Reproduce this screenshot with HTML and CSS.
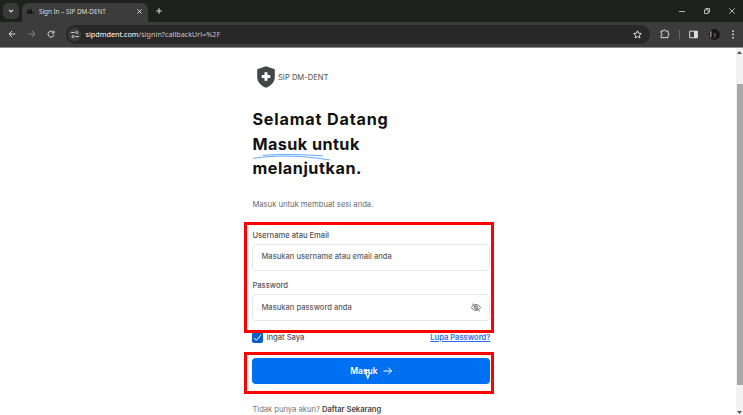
FILE: index.html
```html
<!DOCTYPE html>
<html lang="id">
<head>
<meta charset="utf-8">
<title>Sign In - SIP DM-DENT</title>
<link rel="stylesheet" href="styles.css">
</head>
<body>
<div class="browser">
  <header class="tabs">
    <span class="tab-search"><svg width="6" height="4" viewBox="0 0 6 4"><path d="M1 .8 3 2.8 5 .8"/></svg></span>
    <div class="tab">
      <svg class="favicon" width="9" height="7" viewBox="0 0 9 7"><path d="m1 5.5 2-4v4l2.5-4v4"/><circle cx="7.4" cy="5" r=".5"/></svg>
      <span class="tab-title">Sign In – SIP DM-DENT</span>
      <svg class="close" width="5" height="5" viewBox="0 0 5 5"><path d="m.5.5 4 4m0-4-4 4"/></svg>
    </div>
    <svg class="plus" width="6" height="6" viewBox="0 0 6 6"><path d="M3 .2v5.6M.2 3h5.6"/></svg>
    <div class="window-controls">
      <svg width="6" height="6" viewBox="0 0 6 6"><path d="M0 3.5h6"/></svg>
      <svg width="6" height="6" viewBox="0 0 6 6"><path d="M.5 1.8h3.7v3.7H.5zM1.8 1.5v-1h3.7v3.7h-1"/></svg>
      <svg width="6" height="6" viewBox="0 0 6 6"><path d="m.3.3 5.4 5.4m0-5.4L.3 5.7"/></svg>
    </div>
  </header>
  <nav class="toolbar">
    <svg class="back" width="8" height="8" viewBox="0 0 8 8"><path d="M7.3 4H1m3-3L1 4l3 3"/></svg>
    <svg class="forward" width="8" height="8" viewBox="0 0 8 8"><path d="M.7 4H7M4 1l3 3-3 3"/></svg>
    <svg class="reload" width="8" height="8" viewBox="0 0 8 8"><path d="M6.6 2.5A3 3 0 1 0 7 4.8M7 .6v2.5H4.5"/></svg>
    <div class="address">
      <span class="site-info"><svg width="8" height="7" viewBox="0 0 8 7"><path d="M0 1.5h3.5M4.5 5.5H8"/><circle cx="5.7" cy="1.5" r="1"/><circle cx="2.2" cy="5.5" r="1"/></svg></span>
      <span class="url"><b>sipdmdent.com</b>/signin?callbackUrl=%2F</span>
      <svg class="star" width="9" height="9" viewBox="0 0 9 9"><path d="m4.5.8 1.1 2.4 2.7.3-2 1.8.6 2.7-2.4-1.4L2.1 8l.6-2.7-2-1.8 2.7-.3z"/></svg>
    </div>
    <svg class="puzzle" width="10" height="10" viewBox="0 0 10 10"><path d="M1 2h2.3c.1-1.3 2.1-1.3 2.2 0H8v2.2c1.4.1 1.4 2.1 0 2.2v2.3H1V6.5c1.5-.1 1.5-2.2 0-2.3z"/></svg>
    <span class="divider"></span>
    <svg class="panel" width="9" height="9" viewBox="0 0 9 9"><path d="M.7 1.2h7.6v6.6H.7z"/><path class="solid" d="M5 1h3.5v7H5z"/></svg>
    <svg class="avatar" width="11" height="11" viewBox="0 0 11 11"><circle cx="5.5" cy="5.5" r="5.4" fill="#141619"/><path d="M1.8 2.3v6" stroke="#869196" stroke-width="1.4"/><path d="M5 4.2h1.7v3.4H5z" fill="#865333"/><path d="M3.7 8.3h3v1h-3z" fill="#583522"/></svg>
    <svg class="kebab" width="2" height="9" viewBox="0 0 2 9"><circle cx="1" cy="1.2" r=".9"/><circle cx="1" cy="4.5" r=".9"/><circle cx="1" cy="7.8" r=".9"/></svg>
  </nav>
  <div class="viewport">
    <main class="signin">
      <div class="brand">
        <svg width="18" height="22" viewBox="0 0 18 22"><path d="M9 .2 17.8 3.3v7.5c0 5.2-3.6 9.2-8.8 11C3.8 20 .2 16 .2 10.8V3.3z" fill="#444548"/><path d="M9 6.2v8.6M4.7 10.5h8.6" stroke="#fff" stroke-width="3"/></svg>
        <span>SIP DM-DENT</span>
      </div>
      <h1><span class="line-one">Selamat Datang</span><span class="line-two">Masuk untuk<svg class="swash" width="80" height="9" viewBox="0 0 80 9"><path d="M11 2.3C28 1.2 50 1.2 71 3M1 5.4C22 2 48 2 78 7"/></svg></span><span class="line-three">melanjutkan.</span></h1>
      <p class="intro">Masuk untuk membuat sesi anda.</p>
      <form>
        <section class="fields">
          <label><span>Username atau Email</span><span class="input"><span>Masukan username atau email anda</span></span></label>
          <label><span>Password</span><span class="input"><span>Masukan password anda</span>
            <svg class="eye" width="10" height="9" viewBox="0 0 10 9"><path d="M.5 4.5C2.5.7 7.5.7 9.5 4.5 7.5 8.3 2.5 8.3.5 4.5z"/><circle cx="5" cy="4.5" r="1.6"/><path d="m1.1.7 7.7 7.6"/></svg></span></label>
          <i class="highlight"></i>
        </section>
        <div class="options">
          <span class="remember"><span class="check"><svg width="9" height="9" viewBox="0 0 9 9"><path d="m1 4.8 2.4 2.5L8 1.8"/></svg></span><span>Ingat Saya</span></span>
          <a>Lupa Password?</a>
        </div>
        <div class="submit">
          <div class="button"><span>Masuk</span><svg width="10" height="8" viewBox="0 0 10 8"><path d="M.5 4h8M5.3.8 8.7 4 5.3 7.2"/></svg></div>
          <svg class="pointer" width="9" height="11" viewBox="0 0 9 11"><path d="M1 1.5h5.8M2 2l2.8 7L7 3.3"/></svg>
          <i class="highlight"></i>
        </div>
      </form>
      <p class="register">Tidak punya akun? <b>Daftar Sekarang</b></p>
    </main>
    <aside class="scrollbar">
      <svg width="5" height="3" viewBox="0 0 5 3"><path d="M2.5 0 5 3H0z"/></svg><span class="thumb"></span><svg class="down" width="5" height="3" viewBox="0 0 5 3"><path d="M0 0h5L2.5 3z"/></svg>
    </aside>
  </div>
</div>
</body>
</html>
```
FILE: styles.css
```css
* { box-sizing: border-box; }
body { margin: 0; overflow: hidden; font-family: Inter, "Liberation Sans", sans-serif; color: #505256; }
svg { display: block; flex: none; fill: none; stroke: currentColor; }
.browser { width: 743px; height: 415px; display: flex; flex-direction: column; }
.tabs { height: 22px; background: #1f211f; color: #ddd; display: flex; align-items: center; padding-left: 3px; }
.tab-search { width: 16px; height: 16px; border-radius: 5px; background: #383938; display: grid; place-items: center; }
.tab-search svg { stroke-width: 1.2; }
.tab { align-self: flex-end; width: 126px; height: 19px; margin-left: 3px; background: #3c3c3c; border-radius: 6px 6px 0 0; display: flex; align-items: center; padding: 0 6px 2px 4px; }
.favicon { color: #101111; fill: #101111; }
.tab-title { font: 6.3px "Noto Sans", sans-serif; margin-left: 4px; white-space: nowrap; flex: 1; }
.plus { margin-left: 8px; }
.window-controls { margin: 0 8px 0 auto; display: flex; gap: 19px; }
.window-controls svg { stroke-width: .8; }
.toolbar { height: 26px; background: #3c3c3c; border-bottom: 1px solid #8b8b8b; display: flex; align-items: center; color: #ddd; padding: 0 9px 1px 8px; }
.forward { color: #858585; margin-left: 12px; }
.reload { margin-left: 11px; }
.address { height: 19px; width: 584px; margin-left: 11px; border-radius: 10px; background: #282828; display: flex; align-items: center; padding: 0 8px 0 2px; }
.site-info { width: 13px; height: 13px; border-radius: 50%; background: #3e3e3e; display: grid; place-items: center; }
.site-info svg { stroke-width: .9; }
.url { font: 7.2px "Noto Sans", sans-serif; letter-spacing: .02px; color: #c5c5c5; margin-left: 4.5px; flex: 1; }
.url b { font-weight: 400; color: #fff; }
.puzzle { margin-left: 10px; }
.divider { width: 1px; height: 9px; background: #666; margin-left: 9px; }
.panel { margin-left: 9px; }
.panel .solid { fill: #ddd; stroke: none; }
.avatar { margin-left: 11px; stroke: none; }
.kebab { margin-left: auto; fill: #ddd; stroke: none; }
.viewport { flex: 1; display: flex; justify-content: space-between; background: #fff; min-height: 0; }
.signin { width: 238px; margin-left: 252.4px; padding-top: 18px; display: flex; flex-direction: column; }
.brand { height: 22px; display: flex; align-items: center; gap: 3px; padding-left: 4.6px; font-size: 7.6px; }
.brand svg { stroke: none; }
h1 { margin: 19px 0 0; color: #111; font: 650 16.2px/24.7px Inter, sans-serif; height: 74px; display: flex; flex-direction: column; align-items: flex-start; }
h1 > span { white-space: nowrap; }
.line-one { letter-spacing: .82px; }
.line-two { position: relative; letter-spacing: .45px; }
.line-three { letter-spacing: .55px; }
.swash { position: absolute; left: 0; top: 21px; color: #65a7f5; }
.intro { margin: 18px 0 0; font-size: 7.65px; line-height: 12px; color: #68696c; }
form { margin-top: 18.5px; }
.fields { position: relative; display: flex; flex-direction: column; gap: 9.5px; height: 92.5px; }
label { display: flex; flex-direction: column; font-size: 7.6px; line-height: 12px; font-weight: 500; gap: 2.5px; }
.input { height: 27px; border: 1px solid #e6e7e9; border-radius: 4px; padding: 0 8px; display: flex; align-items: center; justify-content: space-between; color: #5c5d60; }
.input { margin-top: -.4px; }
.input > span { padding-top: .5px; }
.eye { stroke-width: .9; }
.highlight { position: absolute; border: 3px solid #f00; }
.fields .highlight { left: -8.4px; top: -7.5px; width: 250px; height: 111px; }
.options { display: flex; align-items: center; justify-content: space-between; height: 12px; margin-top: 9px; font-size: 7.6px; font-weight: 500; }
.remember { display: flex; align-items: center; gap: 3px; }
.check { width: 11px; height: 11px; border-radius: 2px; background: #0860ce; color: #fff; display: grid; place-items: center; }
.options a { color: #276ef1; text-decoration: underline; font-weight: 600; }
.submit { margin-top: 15px; position: relative; }
.button { height: 26px; border-radius: 4px; background: #0070f3; color: #fff; display: flex; align-items: center; justify-content: center; gap: 5px; font-size: 8.5px; font-weight: 600; }
.pointer { position: absolute; left: 111px; top: 11px; color: #fff; stroke-width: 1.2; }
.submit .highlight { left: -8.4px; top: -6px; width: 250px; height: 42px; }
.register { margin: 19.6px 0 0; font-size: 7.6px; line-height: 12px; color: #737477; white-space: nowrap; }
.register b { color: #444548; font-weight: 600; }
.scrollbar { width: 7px; background: #f1f1f1; display: flex; flex-direction: column; align-items: center; padding: 3px 0 0; }
.scrollbar svg { fill: #555; stroke: none; }
.thumb { width: 6px; height: 301px; background: #a8a8a8; margin-top: 30px; }
.scrollbar .down { margin-top: 26px; }
```
